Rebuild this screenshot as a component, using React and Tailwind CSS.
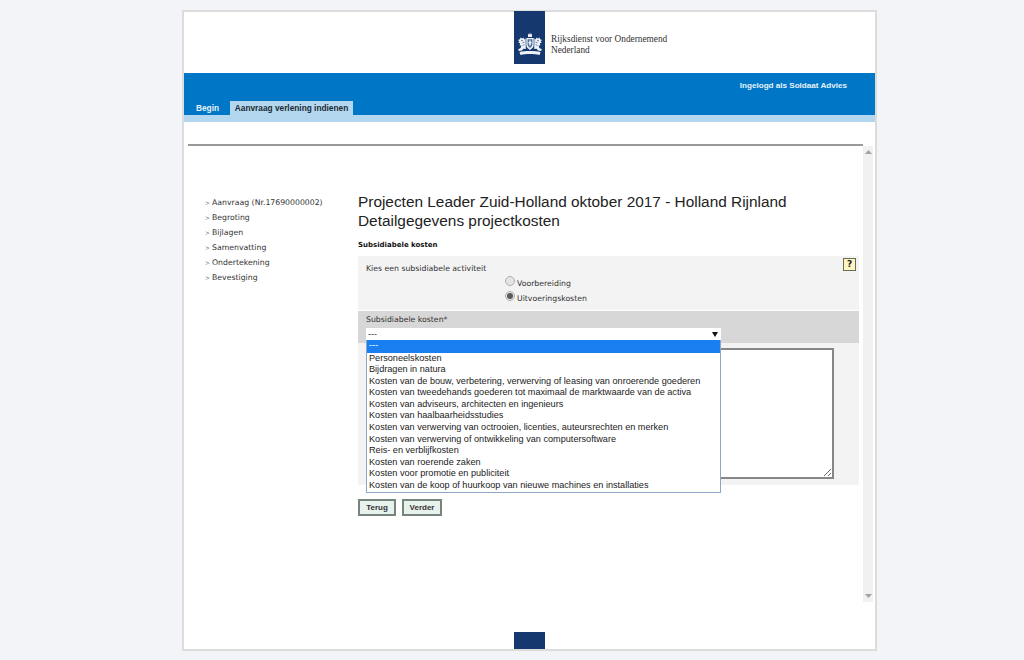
const nav = ["Aanvraag (Nr.17690000002)", "Begroting", "Bijlagen", "Samenvatting", "Ondertekening", "Bevestiging"];
const options = [
  "---",
  "Personeelskosten",
  "Bijdragen in natura",
  "Kosten van de bouw, verbetering, verwerving of leasing van onroerende goederen",
  "Kosten van tweedehands goederen tot maximaal de marktwaarde van de activa",
  "Kosten van adviseurs, architecten en ingenieurs",
  "Kosten van haalbaarheidsstudies",
  "Kosten van verwerving van octrooien, licenties, auteursrechten en merken",
  "Kosten van verwerving of ontwikkeling van computersoftware",
  "Reis- en verblijfkosten",
  "Kosten van roerende zaken",
  "Kosten voor promotie en publiciteit",
  "Kosten van de koop of huurkoop van nieuwe machines en installaties",
];

const verdana = "font-['DejaVu_Sans',sans-serif] text-[7.75px] text-[#333]";
const arial = "font-['Liberation_Sans',Arial,sans-serif]";

function Crest() {
  return (
    <svg width="26" height="24" viewBox="0 0 26 24" fill="#eef2f7" aria-hidden="true">
      <path d="M11 3.2 L11.4 1.6 L12.3 2.4 L13 0.6 L13.7 2.4 L14.6 1.6 L15 3.2 L15 5 L11 5 Z" />
      <path d="M9.3 6 H16.7 V13 C16.7 15.5 14.8 16.8 13 18 C11.2 16.8 9.3 15.5 9.3 13 Z" />
      <path d="M10.6 7.3 H15.4 V12.6 C15.4 14 14 15.2 13 16 C12 15.2 10.6 14 10.6 12.6 Z" fill="#4f6d9a" />
      <path d="M12.2 8.4 H13.8 V13.4 H12.2 Z M11.4 10 H14.6 V11.2 H11.4 Z" />
      <path d="M8.6 6.2 L7.4 7.4 L6.4 5.6 L5 6.8 L3.8 5.2 L2.8 7.2 L1 8 L2.4 9.4 L1.2 10.8 L3.2 11.2 L2.6 13.4 L4.4 13.6 L3.6 16 L1 17.6 L2 19 L5 18.6 L6.4 16.8 L8.8 17 Z" />
      <path d="M17.4 6.2 L18.6 7.4 L19.6 5.6 L21 6.8 L22.2 5.2 L23.2 7.2 L25 8 L23.6 9.4 L24.8 10.8 L22.8 11.2 L23.4 13.4 L21.6 13.6 L22.4 16 L25 17.6 L24 19 L21 18.6 L19.6 16.8 L17.2 17 Z" />
      <circle cx="5" cy="8.6" r="0.7" fill="#15396f" />
      <circle cx="21" cy="8.6" r="0.7" fill="#15396f" />
      <path d="M5.5 11 L7.5 10 M5.5 13.5 L7.5 12.5 M20.5 11 L18.5 10 M20.5 13.5 L18.5 12.5" stroke="#15396f" strokeWidth="0.6" fill="none" />
      <path d="M2.5 20 C8 18.6 18 18.6 23.5 20 L22.6 23 C17 21.6 9 21.6 3.4 23 Z" />
    </svg>
  );
}

function Radio({ checked, label }) {
  return (
    <div className="flex items-start h-[15px]">
      <span className="w-[10px] h-[10px] rounded-full border border-[#b0b0b0] bg-[#e4e4e4] flex items-center justify-center shrink-0">
        {checked && <span className="w-[6px] h-[6px] rounded-full bg-[#5a5a5a]" />}
      </span>
      <span className={`${verdana} ml-[2px] leading-[13px] mt-[1px]`}>{label}</span>
    </div>
  );
}

function Arrow({ up }) {
  return (
    <div className="h-[12px] flex items-center justify-center">
      <svg width="7" height="4" viewBox="0 0 7 4" fill="#a3a3a3" aria-hidden="true">
        <path d={up ? "M0 4 L3.5 0 L7 4 Z" : "M0 0 L7 0 L3.5 4 Z"} />
      </svg>
    </div>
  );
}

export default function App() {
  return (
    <div className="w-[1024px] h-[660px] bg-[#f2f4f7] pt-[10px] overflow-hidden">
      <div className="ml-[182px] w-[695px] h-[641px] border-2 border-[#dcdcdc] bg-white flex flex-col">
        <header className="h-[61px] shrink-0 pl-[330px] flex items-start">
          <div className="-mt-[1px] w-[31px] h-[53px] bg-[#15396f] flex items-end justify-center pb-[8px]">
            <Crest />
          </div>
          <div className="ml-[6px] mt-[22px] font-['Liberation_Serif',serif] text-[9.3px] leading-[10.5px] text-[#333] whitespace-nowrap">
            Rijksdienst voor Ondernemend<br />Nederland
          </div>
        </header>

        <div className="h-[42px] shrink-0 bg-[#0077c6] flex flex-col justify-between">
          <div className={`${arial} text-[8.1px] font-bold text-[#e6f2fa] text-right pr-[28px] pt-[7px] leading-[11px]`}>
            Ingelogd als Soldaat Advies
          </div>
          <div className={`${arial} flex items-end pl-[6px] text-[8.3px] font-bold leading-[14px]`}>
            <div className="w-[40px] h-[14px] text-[#e6f2fa] pl-[6px]">Begin</div>
            <div className="w-[123px] h-[14px] text-center bg-[#b2d7ee] text-[#1b2a36] whitespace-nowrap">Aanvraag verlening indienen</div>
          </div>
        </div>
        <div className="h-[7px] shrink-0 bg-[#b2d7ee]" />

        <div className="mt-[22px] ml-[4px] w-[675px] border-t-2 border-[#999] h-[458px] shrink-0 flex">
          <div className="w-[675px] flex">
            <nav className="w-[170px] shrink-0 pt-[50px] pl-[18px]">
              {nav.map((n) => (
                <div key={n} className={`${verdana} h-[15px] leading-[13px] flex`}>
                  <span className="w-[6px] -ml-[1px] mr-[1px] text-[6px] text-[#666]">&gt;</span>
                  <span className="whitespace-nowrap">{n}</span>
                </div>
              ))}
            </nav>

            <main className="w-[501px] shrink-0">
              <h1 className={`${arial} mt-[47px] text-[15.4px] leading-[18.5px] font-normal text-[#222] whitespace-nowrap`}>
                Projecten Leader Zuid-Holland oktober 2017 - Holland Rijnland<br />
                Detailgegevens projectkosten
              </h1>
              <h2 className="mt-[9px] font-['DejaVu_Sans',sans-serif] text-[7px] font-bold leading-[12px] text-[#111]">
                Subsidiabele kosten
              </h2>

              <section className="mt-[5px] h-[54px] bg-[#f3f3f3] flex">
                <div className="w-[147px] pl-[8px] pt-[6px] shrink-0">
                  <div className={`${verdana} leading-[13px] whitespace-nowrap`}>Kies een subsidiabele activiteit</div>
                </div>
                <div className="pt-[20px] flex-1">
                  <Radio label="Voorbereiding" />
                  <Radio checked label="Uitvoeringskosten" />
                </div>
                <div className="pt-[2px] pr-[3px]">
                  <div className="w-[13px] h-[13px] border border-[#6b6b50] bg-[#fdf6c3] flex items-center justify-center text-[9px] leading-none font-bold font-['DejaVu_Sans',sans-serif] text-[#222]">
                    ?
                  </div>
                </div>
              </section>

              <section className="mt-[1px] relative">
                <div className="h-[32px] bg-[#d7d7d7] pl-[8px] pt-[3px]">
                  <div className={`${verdana} leading-[12px]`}>Subsidiabele kosten*</div>
                  <div className="mt-[2px] w-[355px] h-[12px] bg-white flex items-center justify-between pl-[2px] pr-[3px]">
                    <span className={`${arial} text-[9px] leading-[12px] text-[#333]`}>---</span>
                    <svg width="6" height="5" viewBox="0 0 6 5" fill="#111" aria-hidden="true"><path d="M0 0 H6 L3 5 Z" /></svg>
                  </div>
                </div>
                <div className="h-[142px] bg-[#f3f3f3] pl-[8px] pt-[5px]">
                  <textarea
                    readOnly
                    className="block w-[468px] h-[131px] bg-white border-2 border-[#868686] outline-none"
                  />
                </div>
                <ul className={`${arial} absolute z-10 left-[8px] top-[29px] w-[355px] border border-[#8ea6c6] border-t-0 bg-white text-[9.13px] leading-[11.6px] text-[#222]`}>
                  {options.map((o, i) => (
                    <li
                      key={o}
                      className={i === 0 ? "h-[12.5px] bg-[#1a7ff0] text-white pl-[2px] whitespace-nowrap" : "h-[11.6px] pl-[2px] whitespace-nowrap"}
                    >
                      {o}
                    </li>
                  ))}
                </ul>
              </section>

              <div className="mt-[14px] flex gap-[6px]">
                <button className={`${arial} w-[38px] h-[17px] border-2 border-[#75857c] bg-[#e8f2ec] text-[8px] font-bold leading-none text-[#333]`}>Terug</button>
                <button className={`${arial} w-[40px] h-[17px] border-2 border-[#75857c] bg-[#e8f2ec] text-[8px] font-bold leading-none text-[#333]`}>Verder</button>
              </div>
            </main>

            <div className="w-[4px] shrink-0" />
          </div>
          <div className="w-[10px] h-[456px] shrink-0 bg-[#f1f1f1] flex flex-col justify-between">
            <Arrow up />
            <Arrow />
          </div>
        </div>

        <footer className="flex-1 pl-[330px] flex items-end">
          <div className="w-[31px] h-[17px] bg-[#15396f]" />
        </footer>
      </div>
    </div>
  );
}
